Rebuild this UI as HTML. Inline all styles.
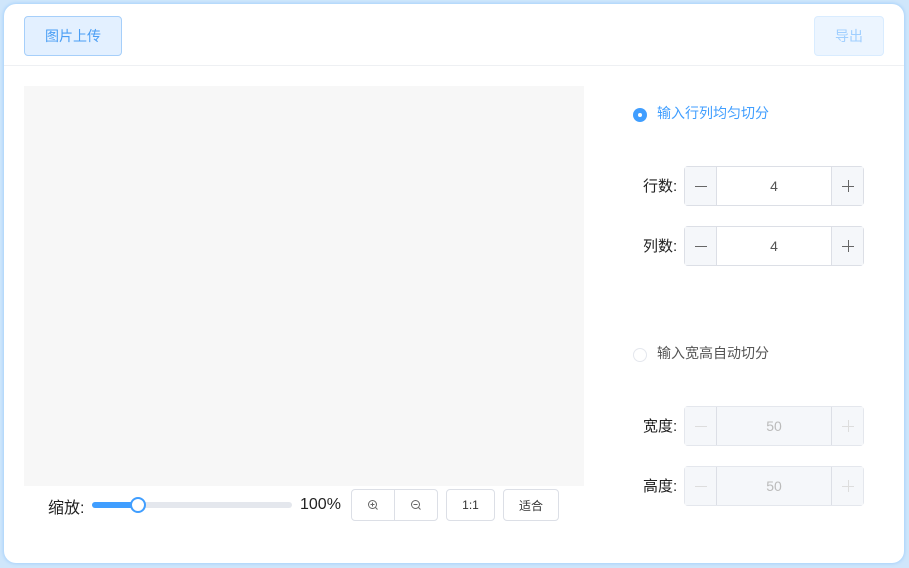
<!DOCTYPE html>
<html><head><meta charset="utf-8"><style>
*{box-sizing:border-box;margin:0;padding:0}
body{width:909px;height:568px;background:#cfe6fb;font-family:"Liberation Sans","Noto Sans CJK SC",sans-serif;position:relative;overflow:hidden}
.card{position:absolute;left:4px;top:4px;width:900px;height:559px;background:#fff;border-radius:12px;box-shadow:0 0 3px 1px #a8d2fb}
.abs{position:absolute}
.btn{position:absolute;border-radius:4px;font-size:14px;display:flex;align-items:center;justify-content:center}
.hr{position:absolute;left:4px;width:900px;top:65px;height:1px;background:#eef0f3}
.canvas{position:absolute;left:24px;top:86px;width:560px;height:400px;background:#f7f7f7}
.lbl{position:absolute;font-size:15px;color:#222}
.num{position:absolute;left:684px;width:180px;height:40px;border:1px solid #dcdfe6;border-radius:4px;background:#fff;font-size:14px;color:#555}
.num .m,.num .p{position:absolute;top:0;width:32px;height:38px;background:#f5f7fa;display:flex;align-items:center;justify-content:center}
.num .m{left:0;border-right:1px solid #dcdfe6}
.num .p{right:0;border-left:1px solid #dcdfe6}
.num .v{position:absolute;left:32px;right:32px;top:0;height:38px;display:flex;align-items:center;justify-content:center}
.dis{color:#bbb;background:#f5f7fa}
.dis svg path{stroke:#ddd}
.sb{position:absolute;top:489px;height:32px;border:1px solid #dcdfe6;border-radius:4px;background:#fff;font-size:12px;color:#333;display:flex;align-items:center;justify-content:center}
</style></head><body>
<div class="card"></div>
<div class="btn" style="left:24px;top:16px;width:98px;height:40px;background:#e3f0ff;border:1px solid #a6cffa;color:#4a9ef5">图片上传</div>
<div class="btn" style="left:814px;top:16px;width:70px;height:40px;background:#ecf5ff;border:1px solid #d9ecff;color:#a0cfff">导出</div>
<div class="hr"></div>
<div class="canvas"></div>
<div class="lbl" style="left:48px;top:495px;font-size:16px;top:494px">缩放:</div>
<div class="abs" style="left:92px;top:502px;width:200px;height:6px;border-radius:3px;background:#e4e7ed"></div>
<div class="abs" style="left:92px;top:502px;width:46px;height:6px;border-radius:3px;background:#409eff"></div>
<div class="abs" style="left:130px;top:497px;width:16px;height:16px;border-radius:50%;background:#fff;border:2px solid #409eff"></div>
<div class="lbl" style="left:300px;top:496px;font-size:16px">100%</div>
<div class="sb" style="left:351px;width:44px;border-radius:4px 0 0 4px"><svg width="12" height="12" viewBox="0 0 12 12"><circle cx="5.5" cy="5.5" r="4" fill="none" stroke="#666"/><path d="M3.5 5.5h4M5.5 3.5v4M8.5 8.5l2 2" stroke="#666"/></svg></div>
<div class="sb" style="left:394px;width:44px;border-radius:0 4px 4px 0"><svg width="12" height="12" viewBox="0 0 12 12"><circle cx="5.5" cy="5.5" r="4" fill="none" stroke="#666"/><path d="M3.5 5.5h4M8.5 8.5l2 2" stroke="#666"/></svg></div>
<div class="sb" style="left:446px;width:49px">1:1</div>
<div class="sb" style="left:503px;width:56px">适合</div>
<div class="abs" style="left:633px;top:108px;width:14px;height:14px;border-radius:50%;background:#409eff"></div>
<div class="abs" style="left:638px;top:113px;width:4px;height:4px;border-radius:50%;background:#fff"></div>
<div class="abs" style="left:657px;top:103px;font-size:14px;color:#409eff">输入行列均匀切分</div>
<div class="lbl" style="left:643px;top:175px">行数:</div>
<div class="num" style="top:166px"><div class="m"><svg width="14" height="14"><path d="M1 7.5h12" stroke="#666"/></svg></div><div class="v">4</div><div class="p"><svg width="14" height="14"><path d="M1 7.5h12M7.5 1v12" stroke="#666"/></svg></div></div>
<div class="lbl" style="left:643px;top:235px">列数:</div>
<div class="num" style="top:226px"><div class="m"><svg width="14" height="14"><path d="M1 7.5h12" stroke="#666"/></svg></div><div class="v">4</div><div class="p"><svg width="14" height="14"><path d="M1 7.5h12M7.5 1v12" stroke="#666"/></svg></div></div>
<div class="abs" style="left:633px;top:348px;width:14px;height:14px;border-radius:50%;border:1px solid #e4e7ed;background:#fff"></div>
<div class="abs" style="left:657px;top:343px;font-size:14px;color:#555">输入宽高自动切分</div>
<div class="lbl" style="left:643px;top:415px">宽度:</div>
<div class="num dis" style="top:406px;border-color:#e4e7ed"><div class="m"><svg width="14" height="14"><path d="M1 7.5h12" stroke="#666"/></svg></div><div class="v">50</div><div class="p"><svg width="14" height="14"><path d="M1 7.5h12M7.5 1v12" stroke="#666"/></svg></div></div>
<div class="lbl" style="left:643px;top:475px">高度:</div>
<div class="num dis" style="top:466px;border-color:#e4e7ed"><div class="m"><svg width="14" height="14"><path d="M1 7.5h12" stroke="#666"/></svg></div><div class="v">50</div><div class="p"><svg width="14" height="14"><path d="M1 7.5h12M7.5 1v12" stroke="#666"/></svg></div></div>
</body></html>
